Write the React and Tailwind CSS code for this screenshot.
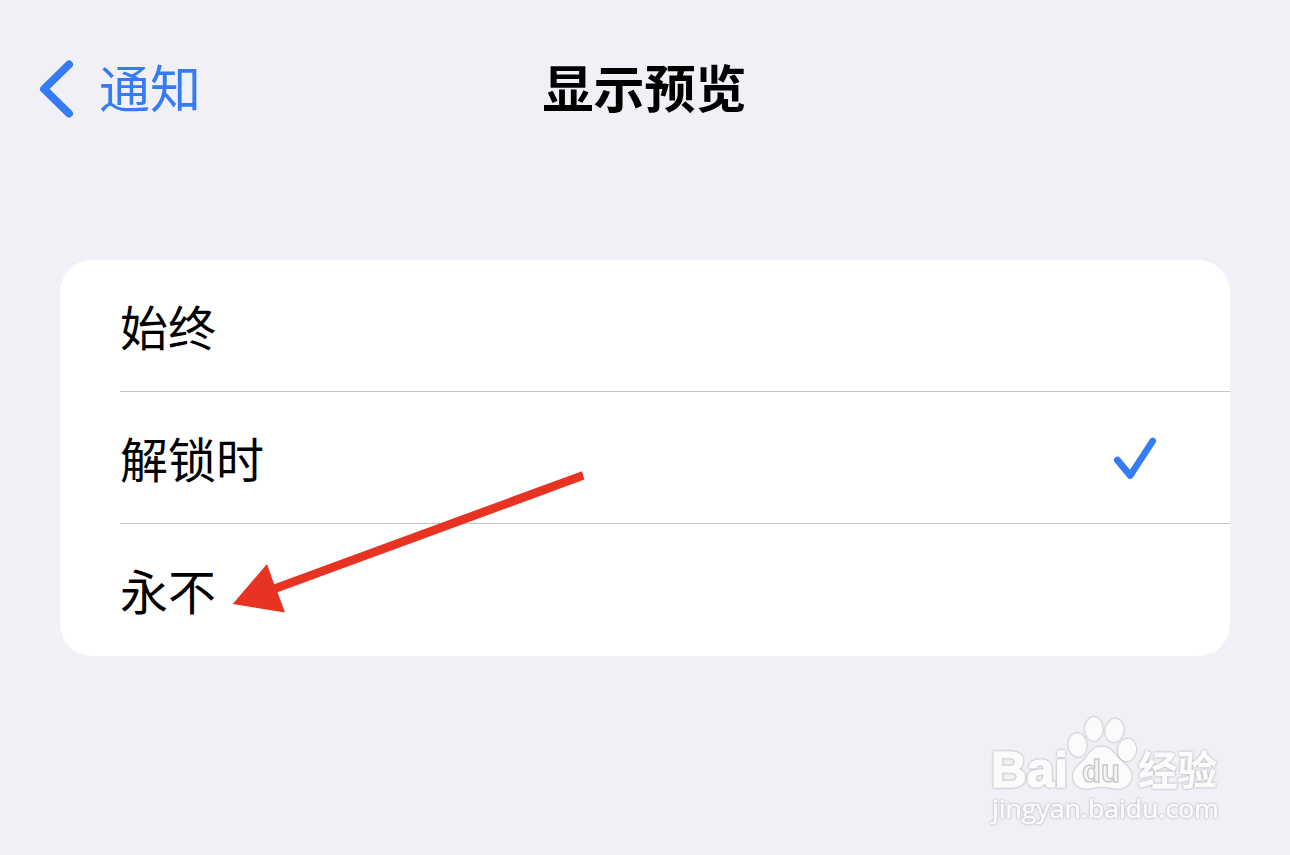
function Header() {
  return (
    <header className="grid h-[180px] grid-cols-3 items-center text-[51px] leading-none">
      <a className="flex items-center pl-[38px] text-[#347bf4]">
        <svg width="38" height="60" viewBox="0 0 38 60" fill="none" stroke="currentColor" strokeWidth="8" strokeLinecap="round" strokeLinejoin="round">
          <path d="M31 4.5 L6 29 L31 53.5" />
        </svg>
        <span className="ml-[23px] pb-2">通知</span>
      </a>
      <h1 className="pb-[7px] pr-px text-center font-bold text-black">显示预览</h1>
    </header>
  );
}

function Row({ label, checked, last }) {
  return (
    <li className="flex h-[132px] pl-[60px]">
      <div className={`flex flex-1 items-center justify-between pr-[72px] ${last ? "" : "border-b border-[#c3c3c5]"}`}>
        <span className="pb-0.5 text-[48px] leading-none text-black">{label}</span>
        {checked && (
          <svg width="46" height="46" viewBox="0 0 46 46" fill="none" stroke="#347bf4" strokeWidth="6.8" strokeLinecap="round" strokeLinejoin="round">
            <path d="M5.4 25 L18.2 40.5 L40.7 6" />
          </svg>
        )}
      </div>
    </li>
  );
}

function Arrow() {
  return (
    <svg className="absolute left-[230px] top-[465px]" width="360" height="155" viewBox="230 465 360 155" fill="#e83323">
      <path d="M232.7 604 L267 564 L274.2 584.2 L582 471.2 L584.4 479.6 L277.5 592.3 L285 612.6 Z" />
    </svg>
  );
}

function Watermark() {
  return (
    <svg className="absolute left-[980px] top-[705px] drop-shadow-[0_0_1px_rgba(0,0,0,0.35)]" width="250" height="130" viewBox="0 0 250 130" fill="#fbfbfc" stroke="#fbfbfc">
      <text x="11" y="82" fontSize="50" fontWeight="700" textLength="77" lengthAdjust="spacingAndGlyphs" fontFamily="Liberation Sans, sans-serif" strokeWidth="1.6">Bai</text>
      <ellipse cx="97.5" cy="40" rx="8.6" ry="11.2" transform="rotate(-8 97.5 40)" />
      <ellipse cx="113.8" cy="24" rx="8.4" ry="11.4" />
      <ellipse cx="134.5" cy="25.5" rx="8.6" ry="11.2" transform="rotate(10 134.5 25.5)" />
      <ellipse cx="147" cy="45" rx="8.6" ry="10.8" transform="rotate(8 147 45)" />
      <path d="M122 42 C131 42 134 50 141 56 C147 61 152 66 151 73 C149 82 142 84 134 83 C125 81 119 81 110 83 C101 84 94 81 93.5 72 C93 63 102 59 107 52 C111 46 115 42 122 42 Z" />
      <text x="102" y="77" fontSize="31" fontWeight="700" textLength="38" lengthAdjust="spacingAndGlyphs" fontFamily="Liberation Sans, sans-serif" fill="#f4f4f6" stroke="#c8c8cb" strokeWidth="1.4">du</text>
      <text x="158" y="80" fontSize="40" fontWeight="700" textLength="79" lengthAdjust="spacingAndGlyphs" fontFamily="Noto Sans CJK SC, sans-serif" strokeWidth="0.4">经验</text>
      <text x="12" y="113" fontSize="25" fontWeight="400" textLength="227" lengthAdjust="spacingAndGlyphs" fontFamily="Open Sans, sans-serif" strokeWidth="0.7">jingyan.baidu.com</text>
    </svg>
  );
}

export default function App() {
  return (
    <main className="relative h-[855px] w-[1290px] overflow-hidden bg-[#f1f0f6] font-['Noto_Sans_CJK_SC',sans-serif]">
      <Header />
      <ul className="mx-[60px] mt-20 overflow-hidden rounded-[32px] bg-white">
        <Row label="始终" />
        <Row label="解锁时" checked />
        <Row label="永不" last />
      </ul>
      <Arrow />
      <Watermark />
    </main>
  );
}
